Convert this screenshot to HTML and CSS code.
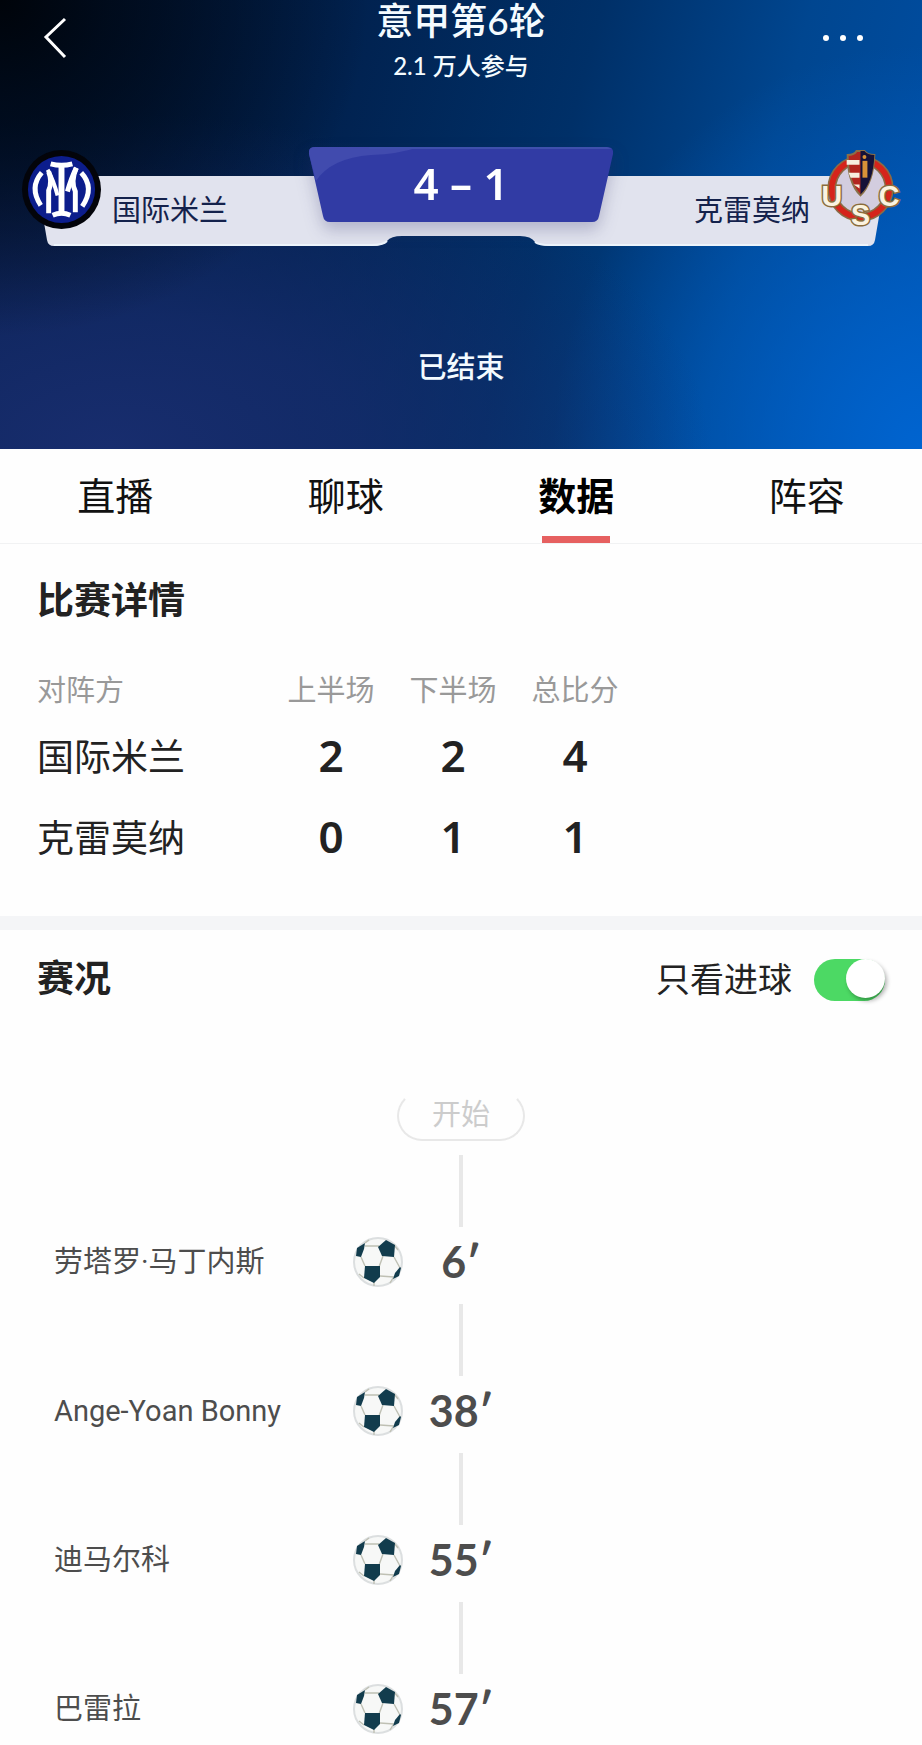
FILE: index.html
```
<!DOCTYPE html>
<html lang="zh-CN">
<head>
    <meta charset="UTF-8">
    <meta name="viewport" content="width=device-width, initial-scale=1">
    <title>国际米兰 4 - 1 克雷莫纳</title>
    <link rel="stylesheet" href="styles.css">
</head>
<body>
<svg class="defs" aria-hidden="true">
    <symbol id="ball" viewBox="0 0 50 50">
        <circle cx="25" cy="25" r="24" fill="#f7f8f7" stroke="#dcdfe0" stroke-width="2"/>
        <path d="M12 9H26M8 20L12 29M30 19L26 30M41 20L47 31M27 39L41 40M11 41L6 37M21 45V49M40 41L37 46M12 6L16 3M41 8L45 13" fill="none" stroke="#bfc0b4" stroke-width="1.4"/>
        <g fill="#123c4d">
            <path d="M33 3L42 8L41 20L29 19L25 10Z"/>
            <path d="M12 29L27 29L27 40L21 46L11 41Z"/>
            <path d="M4 11L12 6L11 12L8 20L3 19Z"/>
            <path d="M47 30L48 31L46 39L40 42L42 36Z"/>
        </g>
    </symbol>
</svg>

<header class="top">
    <div class="nav">
        <button class="back" type="button" aria-label="返回">
            <svg width="24" height="42" viewBox="0 0 24 42"><path d="M22 2L3 20L22 40" fill="none" stroke="#fff" stroke-width="3"/></svg>
        </button>
        <div class="match">
            <h1>意甲第6轮</h1>
            <p>2.1 万人参与</p>
        </div>
        <button class="more" type="button" aria-label="更多">
            <svg width="42" height="8" viewBox="0 0 42 8" fill="#fff"><circle cx="4" cy="4" r="3"/><circle cx="21" cy="4" r="3"/><circle cx="38" cy="4" r="3"/></svg>
        </button>
    </div>

    <div class="board">
        <svg class="plate" viewBox="0 0 850 70" preserveAspectRatio="none" aria-hidden="true">
            <path d="M0 0H850L839 64Q838 70 832 70H514Q503 70 499 66Q495 60 484 60H366Q355 60 351 65Q347 70 336 70H18Q12 70 11 64Z" fill="#e1e3ee"/>
            <path d="M18 69H336Q347 69 351 65M499 66Q503 69 514 69H832" fill="none" stroke="#edf4fb" stroke-width="2"/>
        </svg>
        <div class="team home">
            <svg class="logo" viewBox="0 0 80 80" role="img" aria-label="国际米兰">
                <circle cx="40" cy="40" r="40" fill="#03040a"/>
                <circle cx="40" cy="40" r="34" fill="#0c1d8c"/>
                <g fill="none" stroke="#fff">
                    <path d="M40 14V66" stroke-width="6"/>
                    <path d="M29 14Q40 17 51 14M31 66Q40 62 49 66" stroke-width="5"/>
                    <path d="M26 20Q32 31 36 46" stroke-width="4"/>
                    <path d="M27 22Q31 32 27 41V64" stroke-width="5"/>
                    <path d="M55 18Q50 28 46 42" stroke-width="5"/>
                    <path d="M55 18Q49 32 54 42V63" stroke-width="5"/>
                    <path d="M20 23Q7 38 19 56" stroke-width="5"/>
                    <path d="M60 23Q74 38 61 57" stroke-width="5"/>
                </g>
            </svg>
            <span>国际米兰</span>
        </div>
        <div class="score">
            <svg viewBox="0 0 304 75" preserveAspectRatio="none" aria-hidden="true">
                <path d="M6 0H298Q305 0 304 7L290 69Q289 75 283 75H21Q15 75 14 69L0 7Q-1 0 6 0Z" fill="#313ba4"/>
                <path d="M6 0H110Q90 7 62 8Q22 11 7 34L0 7Q-1 0 6 0Z" fill="#414bae"/>
                <path d="M60 0H298L303 2H60Z" fill="#3f50ad"/>
            </svg>
            <strong>4 – 1</strong>
        </div>
        <div class="team away">
            <span>克雷莫纳</span>
            <svg class="logo" viewBox="0 0 80 80" role="img" aria-label="克雷莫纳">
                <circle cx="40" cy="39" r="29" fill="#d3cddf" stroke="#8b6b45" stroke-width="9"/>
                <circle cx="40" cy="39" r="29" fill="none" stroke="#d5241b" stroke-width="6"/>
                <path d="M27 5Q34 5 36 1H44Q47 5 54 5Q53 33 40 46Q27 33 27 5Z" fill="#b3261f" stroke="#8a7048" stroke-width="2"/>
                <path d="M40 1H44Q47 5 54 5Q53 33 40 45Z" fill="#151239"/>
                <path d="M26 10H39V15H26ZM28 23H39V28H30ZM33 35H39V39Z" fill="#f7efdf"/>
                <path d="M42 11H47V28H42Z" fill="#d89238"/>
                <circle cx="44" cy="7" r="2" fill="#d89238"/>
                <g class="usc">
                    <text x="11" y="57">U</text>
                    <text x="40" y="76">S</text>
                    <text x="69" y="57">C</text>
                </g>
            </svg>
        </div>
    </div>

    <p class="state">已结束</p>
</header>

<nav class="tabs">
    <a href="#live">直播</a>
    <a href="#chat">聊球</a>
    <a href="#data" class="select">数据</a>
    <a href="#lineup">阵容</a>
</nav>

<section class="detail" id="data">
    <h2>比赛详情</h2>
    <table>
        <thead>
        <tr><th>对阵方</th><th>上半场</th><th>下半场</th><th>总比分</th></tr>
        </thead>
        <tbody>
        <tr><th>国际米兰</th><td>2</td><td>2</td><td>4</td></tr>
        <tr><th>克雷莫纳</th><td>0</td><td>1</td><td>1</td></tr>
        </tbody>
    </table>
</section>

<section class="events">
    <div class="events-head">
        <h2>赛况</h2>
        <label for="goals">只看进球</label>
        <input type="checkbox" id="goals" checked>
    </div>
    <div class="start">开始</div>
    <ol>
        <li>
            <span class="name">劳塔罗·马丁内斯</span>
            <svg class="ball" aria-hidden="true"><use href="#ball"/></svg>
            <time>6′</time>
        </li>
        <li>
            <span class="name">Ange-Yoan Bonny</span>
            <svg class="ball" aria-hidden="true"><use href="#ball"/></svg>
            <time>38′</time>
        </li>
        <li>
            <span class="name">迪马尔科</span>
            <svg class="ball" aria-hidden="true"><use href="#ball"/></svg>
            <time>55′</time>
        </li>
        <li>
            <span class="name">巴雷拉</span>
            <svg class="ball" aria-hidden="true"><use href="#ball"/></svg>
            <time>57′</time>
        </li>
    </ol>
</section>
</body>
</html>
```
FILE: styles.css
```
*{
    margin:0;
    padding:0;
    box-sizing:border-box;
}
body{
    background:#fefefe;
    color:#222;
    font-family:Roboto, "Noto Sans CJK SC", sans-serif;
}
button{
    border:0;
    background:none;
    cursor:pointer;
}
.defs{
    display:none;
}

/* header */
.top{
    height:449px;
    color:#f4fbff;
    background:
        radial-gradient(ellipse 40% 75% at 0 0, #00040a 0, rgba(0,8,20,.8) 30%, rgba(0,16,40,0) 100%),
        radial-gradient(ellipse 65% 75% at 12% 100%, #182d6e 0, rgba(22,44,108,.8) 40%, rgba(12,44,104,0) 100%),
        radial-gradient(ellipse 40% 90% at 100% 100%, #0064d0 0, rgba(0,88,188,0) 100%),
        linear-gradient(105deg, #001434 0, #012250 35%, #003068 58%, #004690 78%, #0050a8 100%);
}
.nav{
    display:grid;
    grid-template-columns:1fr auto 1fr;
    height:147px;
}
.back{
    justify-self:start;
    align-self:start;
    padding:17px 20px 17px 43px;
}
.back svg, .more svg{
    display:block;
}
.more{
    justify-self:end;
    align-self:start;
    padding:34px 58px 34px 20px;
}
.match{
    text-align:center;
    font-family:Lato, "Noto Sans CJK SC", sans-serif;
}
.match h1{
    font-size:37px;
    line-height:42px;
    font-weight:500;
}
.match p{
    font-size:24px;
    line-height:48px;
    font-weight:500;
}
.board{
    position:relative;
    display:grid;
    grid-template-columns:1fr 304px 1fr;
    height:99px;
    padding:0 22px;
}
.plate{
    position:absolute;
    left:36px;
    bottom:0;
    width:calc(100% - 72px);
    height:70px;
}
.team{
    position:relative;
    display:flex;
    gap:11px;
    font-size:29px;
    line-height:42px;
    color:#14224c;
}
.team span{
    padding-top:43px;
}
.away{
    justify-content:flex-end;
}
.logo{
    width:79px;
    height:79px;
    margin-top:3px;
    overflow:visible;
}
.usc{
    font:bold 29px "Liberation Sans", sans-serif;
    text-anchor:middle;
    fill:#fbf3e0;
    stroke:#8a6c3c;
    stroke-width:3px;
    paint-order:stroke;
}
.score{
    position:relative;
    height:75px;
    text-align:center;
    color:#fff;
    filter:drop-shadow(0 8px 8px rgba(40,40,100,.25));
}
.score svg{
    position:absolute;
    left:0;
    top:0;
    width:100%;
    height:100%;
}
.score strong{
    position:relative;
    font:600 44px/73px "Noto Sans", sans-serif;
}
.state{
    padding-top:102px;
    text-align:center;
    font-size:29px;
    line-height:40px;
    font-weight:500;
}

/* tabs */
.tabs{
    display:flex;
    height:95px;
    border-bottom:1px solid #f1f2f3;
}
.tabs a{
    flex:1;
    display:flex;
    flex-direction:column;
    align-items:center;
    justify-content:space-between;
    padding-top:18px;
    color:#111;
    font-size:38px;
    line-height:60px;
    text-decoration:none;
}
.tabs .select{
    color:#000;
    font-weight:bold;
}
.tabs .select::after{
    content:"";
    width:68px;
    height:7px;
    background:#e66060;
}

/* match detail */
h2{
    font-size:37px;
    line-height:56px;
    font-weight:bold;
}
.detail{
    padding:30px 37px 40px;
    border-bottom:14px solid #f4f5f7;
}
.detail table{
    margin-top:32px;
    border-collapse:collapse;
    table-layout:fixed;
    width:599px;
}
.detail th{
    font-weight:normal;
    text-align:center;
}
.detail th:first-child{
    width:233px;
    text-align:left;
}
.detail thead th{
    height:52px;
    font-size:29px;
    color:#999;
}
.detail tbody th{
    height:81px;
    font-size:37px;
}
.detail td{
    text-align:center;
    font:600 44px "Noto Sans", sans-serif;
}

/* events */
.events-head{
    display:flex;
    align-items:center;
    padding:22px 37px 0;
}
.events-head label{
    margin-left:auto;
    font-size:34px;
    line-height:56px;
}
.events-head input{
    appearance:none;
    width:71px;
    height:42px;
    margin-left:22px;
    border-radius:21px;
    background:#4cd964;
    cursor:pointer;
}
.events-head input::before{
    content:"";
    display:block;
    width:39px;
    height:39px;
    border-radius:50%;
    background:#fff;
    box-shadow:2px 3px 4px rgba(0,0,0,.3);
}
.events-head input:checked::before{
    margin-left:auto;
}
.start{
    width:128px;
    height:50px;
    margin:83px auto 14px;
    border:2px solid #e8e8e8;
    border-top-color:transparent;
    border-radius:25px;
    color:#ccc;
    font-size:29px;
    line-height:44px;
    text-align:center;
}
.events ol{
    list-style:none;
}
.events li{
    display:grid;
    grid-template-columns:calc(50% - 108px) 50px 116px 1fr;
    align-items:center;
    padding-bottom:7px;
    color:#4d4d4d;
}
.events li:last-child{
    padding-bottom:0;
}
.events li::before{
    content:"";
    grid-column:1 / -1;
    justify-self:center;
    width:4px;
    height:72px;
    background:#e8e8e8;
}
.name{
    padding-left:54px;
    font-size:29px;
    line-height:70px;
}
.ball{
    width:50px;
    height:50px;
}
.events time{
    font:bold 43px/70px Lato, sans-serif;
    text-align:center;
}
```
